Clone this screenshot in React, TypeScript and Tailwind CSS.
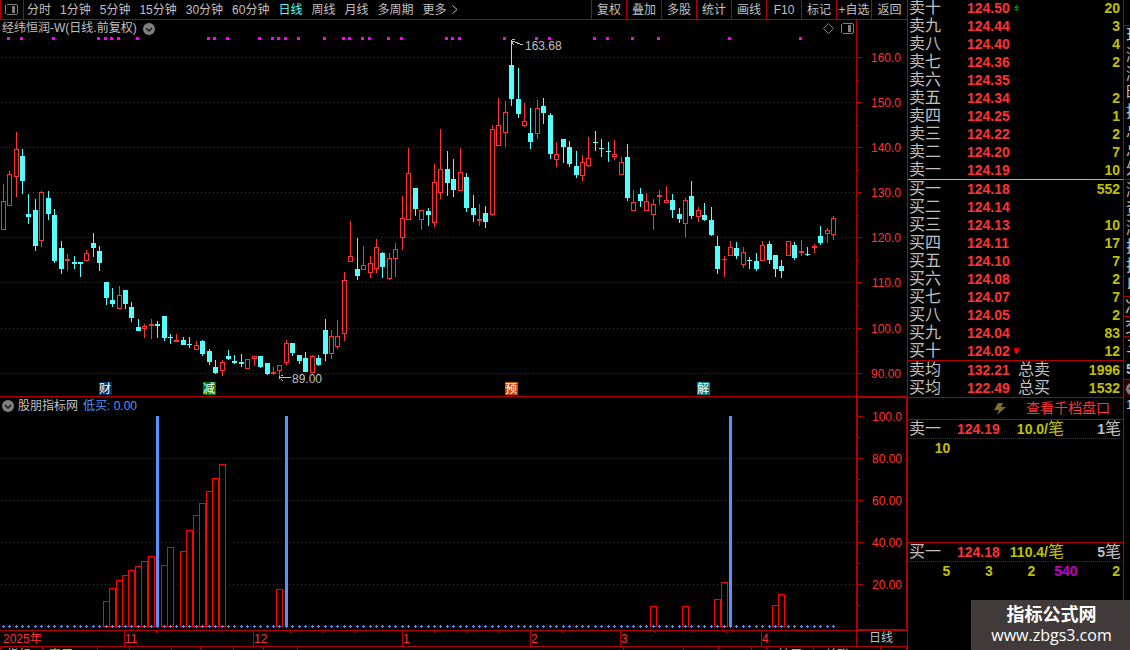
import React from 'react';

// x, high, body top, body bottom, low, direction (1 = up, 0 = down)
const candles = [
  [3, 184, 201, 230, 230, 1], [9, 171, 174, 206, 206, 1], [16, 132, 149, 177, 197, 1], [22, 149, 156, 181, 194, 0],
  [28, 194, 214, 217, 224, 0], [35, 199, 210, 246, 251, 0], [41, 191, 192, 241, 247, 1], [48, 191, 198, 214, 220, 0],
  [54, 209, 215, 261, 263, 0], [61, 241, 248, 269, 274, 0], [67, 254, 259, 261, 271, 1], [74, 256, 262, 264, 269, 0],
  [80, 262, 262, 264, 277, 0], [86, 250, 253, 261, 261, 1], [93, 233, 243, 248, 257, 0], [99, 246, 251, 263, 271, 0],
  [106, 282, 282, 298, 305, 0], [112, 288, 300, 304, 307, 0], [119, 286, 295, 309, 309, 1], [125, 290, 290, 304, 309, 0],
  [131, 302, 307, 318, 322, 0], [138, 319, 327, 331, 331, 0], [144, 324, 326, 329, 338, 1], [151, 319, 324, 326, 339, 1],
  [157, 321, 324, 326, 338, 0], [164, 316, 316, 338, 341, 0], [170, 334, 337, 338, 344, 0], [176, 334, 340, 342, 342, 1],
  [183, 337, 340, 345, 345, 0], [189, 337, 344, 345, 348, 0], [196, 341, 345, 350, 350, 1], [202, 340, 341, 354, 356, 0],
  [209, 349, 351, 362, 365, 0], [215, 360, 367, 373, 374, 0], [222, 360, 362, 371, 376, 1], [228, 350, 356, 359, 360, 0],
  [234, 355, 361, 363, 364, 0], [241, 354, 362, 364, 367, 0], [247, 359, 359, 369, 369, 1], [254, 356, 356, 359, 366, 1],
  [260, 356, 356, 367, 368, 0], [267, 363, 363, 374, 375, 0], [273, 367, 372, 374, 375, 1], [279, 365, 365, 371, 376, 1],
  [286, 340, 343, 363, 365, 1], [292, 343, 343, 353, 356, 0], [299, 355, 355, 361, 364, 0], [305, 352, 358, 372, 372, 0],
  [312, 355, 356, 373, 373, 1], [318, 355, 358, 365, 366, 0], [325, 319, 330, 354, 361, 0], [331, 330, 336, 354, 359, 1],
  [337, 320, 336, 347, 349, 1], [344, 272, 280, 334, 341, 1], [350, 221, 256, 262, 262, 1], [357, 238, 269, 276, 280, 0],
  [363, 246, 265, 270, 270, 1], [370, 256, 263, 273, 278, 1], [376, 239, 247, 269, 273, 1], [382, 252, 253, 267, 278, 0],
  [389, 253, 258, 279, 280, 1], [395, 243, 249, 259, 277, 1], [402, 196, 218, 238, 250, 1], [408, 148, 173, 220, 220, 1],
  [415, 188, 188, 209, 216, 0], [421, 210, 210, 220, 230, 1], [428, 208, 211, 215, 226, 0], [434, 164, 182, 223, 227, 1],
  [440, 129, 169, 193, 199, 1], [447, 151, 169, 183, 196, 0], [453, 159, 179, 190, 197, 0], [460, 148, 172, 191, 191, 1],
  [466, 173, 177, 208, 212, 0], [473, 195, 208, 215, 222, 0], [479, 204, 219, 221, 226, 1], [485, 206, 213, 222, 228, 0],
  [492, 125, 129, 215, 216, 1], [498, 98, 125, 146, 146, 1], [505, 101, 112, 133, 147, 1], [511, 40, 65, 99, 106, 0],
  [518, 68, 99, 114, 118, 0], [524, 103, 121, 126, 127, 1], [530, 108, 133, 142, 149, 0], [537, 100, 108, 134, 139, 1],
  [543, 98, 106, 113, 124, 0], [550, 113, 115, 154, 159, 0], [556, 142, 154, 160, 167, 1], [563, 139, 139, 147, 163, 0],
  [569, 141, 147, 164, 167, 0], [576, 151, 166, 175, 178, 0], [582, 155, 162, 176, 181, 1], [588, 137, 158, 166, 167, 1],
  [595, 131, 142, 143, 151, 0], [601, 139, 148, 149, 157, 0], [608, 142, 151, 152, 162, 0], [614, 140, 154, 157, 160, 1],
  [621, 157, 162, 175, 175, 1], [627, 144, 157, 198, 201, 0], [633, 190, 202, 211, 211, 1], [640, 188, 194, 201, 207, 0],
  [646, 193, 201, 211, 211, 1], [653, 199, 204, 215, 230, 1], [659, 190, 195, 197, 205, 1], [666, 186, 200, 203, 203, 1],
  [672, 194, 200, 210, 218, 0], [679, 208, 214, 219, 223, 0], [685, 198, 200, 224, 238, 1], [691, 181, 196, 216, 219, 0],
  [698, 207, 210, 217, 222, 1], [704, 203, 215, 220, 221, 0], [711, 207, 220, 235, 236, 0], [717, 236, 246, 269, 274, 0],
  [724, 256, 259, 260, 277, 1], [730, 241, 247, 256, 256, 1], [736, 242, 248, 256, 259, 0], [743, 247, 252, 265, 268, 1],
  [749, 257, 260, 261, 269, 0], [756, 253, 261, 269, 271, 0], [762, 241, 245, 261, 261, 1], [769, 241, 244, 260, 264, 0],
  [775, 255, 255, 269, 277, 0], [781, 260, 266, 271, 278, 0], [788, 241, 241, 256, 256, 1], [794, 242, 245, 258, 260, 0],
  [801, 240, 251, 253, 256, 1], [807, 247, 254, 255, 256, 0], [814, 244, 246, 248, 253, 1], [820, 226, 236, 243, 245, 0],
  [827, 228, 230, 234, 243, 1], [833, 216, 218, 235, 240, 1],
];

const signals = [
  7, 20, 52, 97, 104, 110, 117, 136, 207, 213, 226, 258, 271, 277, 284, 297, 323, 342, 348, 361, 368, 387, 400,
  445, 451, 458, 503, 535, 548, 593, 606, 631, 657, 728, 799,
];

const priceTicks: [number, string][] = [
  [57, '160.0'], [102, '150.0'], [147, '140.0'], [192, '130.0'],
  [237, '120.0'], [282, '110.0'], [328, '100.0'], [373, '90.00'],
];
const priceMinor = [80, 125, 170, 215, 260, 305, 351];

const indicatorTicks: [number, string][] = [
  [416, '100.0'], [458, '80.00'], [500, '60.00'], [542, '40.00'], [584, '20.00'],
];
const indicatorMinor = [437, 479, 521, 563, 605];

// x centre, top
const redBars = [
  [106, 601], [112, 588], [119, 580], [125, 575], [131, 570], [138, 566], [144, 561], [151, 556], [164, 565],
  [170, 547], [183, 551], [189, 530], [196, 515], [202, 503], [209, 491], [215, 478], [222, 464], [279, 589],
  [653, 606], [685, 606], [717, 599], [724, 582], [775, 605], [781, 594],
];
const blueBars = [156, 285, 729];

const events = [
  { x: 99, text: '财', color: '#003468' },
  { x: 203, text: '减', color: '#008000' },
  { x: 505, text: '预', color: '#c84800' },
  { x: 697, text: '解', color: '#008080' },
];

const months: [number, string][] = [[124, '11'], [253, '12'], [402, '1'], [530, '2'], [620, '3'], [761, '4']];
const weekTicks = [156, 189, 221, 290, 322, 354, 434, 466, 498, 562, 655, 691, 726];

const periods = ['分时', '1分钟', '5分钟', '15分钟', '30分钟', '60分钟', '日线', '周线', '月线', '多周期'];
const tools = ['复权', '叠加', '多股', '统计', '画线', 'F10', '标记', '+自选', '返回'];

const sells = [
  ['卖十', '124.50', '20'], ['卖九', '124.44', '3'], ['卖八', '124.40', '4'], ['卖七', '124.36', '2'],
  ['卖六', '124.35', ''], ['卖五', '124.34', '2'], ['卖四', '124.25', '1'], ['卖三', '124.22', '2'],
  ['卖二', '124.20', '7'], ['卖一', '124.19', '10'],
];
const buys = [
  ['买一', '124.18', '552'], ['买二', '124.14', ''], ['买三', '124.13', '10'], ['买四', '124.11', '17'],
  ['买五', '124.10', '7'], ['买六', '124.08', '2'], ['买七', '124.07', '7'], ['买八', '124.05', '2'],
  ['买九', '124.04', '83'], ['买十', '124.02', '12'],
];
const totals = [
  ['卖均', '132.21', '1996', '总卖'],
  ['买均', '122.49', '1532', '总买'],
];

const sideTop = ['现', '涨', '涨', '昨', '换', '总', '总', '外'];
const sideBottom = ['涨', '资', '涨', '换', '换', '以'];

const leftTabs = [
  { text: '指标', style: 'w-[42px]' },
  { text: '窗口', style: 'w-[55px] text-[#c0c000]' },
  { text: '', style: 'w-[32px]' },
  { text: '', style: 'w-[42px]' },
  { text: '', style: 'w-[29px]' },
  { text: '', style: 'w-[33px]' },
  { text: '', style: 'w-[30px]' },
  { text: '', style: 'w-[34px]' },
];
const rightTabs = [
  { text: '', style: 'w-[60px]' },
  { text: '', style: 'w-[35px]' },
  { text: '', style: 'w-[33px]' },
  { text: '', style: 'w-[15px]' },
  { text: '扩展', style: 'w-[47px]' },
  { text: '关联', style: 'w-[67px]' },
  { text: '', style: 'w-[26px]' },
];

function PanelIcon() {
  return (
    <svg width="13" height="11" viewBox="0 0 13 11" shapeRendering="crispEdges">
      <path d="M1.500.5h10M1.500 10.500h10M.5 1v9M12.500 1v9" fill="none" stroke="currentColor" />
      <rect x="7" y="2" width="3" height="7" fill="currentColor" />
    </svg>
  );
}

function CollapseIcon() {
  return (
    <svg width="12" height="12" viewBox="0 0 12 12">
      <circle cx="6" cy="6" r="6" fill="#808080" />
      <path d="M3 5l3 3 3-3" fill="none" stroke="#181818" strokeWidth="1.5" />
    </svg>
  );
}

function GridLine({ y }: { y: number }) {
  return <line x1="1" x2="855" y1={y + 0.5} y2={y + 0.5} stroke="#b00000" strokeDasharray="1 3" />;
}

function Candle({ data }: { data: number[] }) {
  const [x, high, top, bottom, low, up] = data;
  const color = up ? '#ff3232' : '#54ffff';
  const hollow = up === 1 && bottom - top > 2;
  return (
    <g fill={color}>
      <rect x={x} y={high} width="1" height={top - high} />
      <rect x={x} y={bottom} width="1" height={low - bottom} />
      {hollow ? (
        <rect x={x - 1.5} y={top + 0.5} width="4" height={bottom - top - 1} fill="#000" stroke={color} />
      ) : (
        <rect x={x - 2} y={top} width="5" height={bottom - top} />
      )}
    </g>
  );
}

function PriceChart() {
  return (
    <svg width="856" height="359" viewBox="0 37 856 359" className="block" shapeRendering="crispEdges">
      {priceTicks.map(([y]) => <GridLine key={y} y={y} />)}
      {signals.map((x) => <rect key={x} x={x} y="37" width="3" height="3" fill="#f0f" />)}
      {candles.map((c) => <Candle key={c[0]} data={c} />)}
      <g fill="none" stroke="#c0c0c0">
        <path d="M523 44.500h-3M520 43.500h-3M518 42.500h-3M515 41.500h-3M512 39.500h3M512.500 41v3M513 44.500h1" />
        <path d="M291 377.500h-11M279.500 376v3M281 375.500h2M281 379.500h1M282 380.500h1" />
      </g>
      <g fill="#c0c0c0" fontSize="12">
        <text x="525" y="50">163.68</text>
        <text x="292" y="383">89.00</text>
      </g>
      {events.map((e) => (
        <g key={e.text}>
          <rect x={e.x} y="382" width="13" height="13" fill={e.color} />
          <text x={e.x} y="393" fontSize="12" fill="#fff">{e.text}</text>
        </g>
      ))}
    </svg>
  );
}

function IndicatorChart() {
  return (
    <svg width="855" height="215" viewBox="0 415 855 215" className="block" shapeRendering="crispEdges">
      {indicatorTicks.slice(1).map(([y]) => <GridLine key={y} y={y} />)}
      {redBars.map(([x, top]) => (
        <rect key={x} x={x - 2.5} y={top + 0.5} width="6" height={626 - top} fill="#000" stroke="#f00" />
      ))}
      {candles.map(([x]) => (
        <path key={x} d={`M${x - 1} 626.5h3M${x + 0.5} 625v3`} stroke="#5494ff" />
      ))}
      {blueBars.map((x) => <rect key={x} x={x} y="416" width="3" height="211" fill="#5494ff" />)}
    </svg>
  );
}

type AxisProps = { top: number; height: number; ticks: [number, string][]; minor: number[] };

function Axis({ top, height, ticks, minor }: AxisProps) {
  return (
    <svg width="48" height={height} viewBox={`0 ${top} 48 ${height}`} className="block" shapeRendering="crispEdges">
      {minor.map((y) => <rect key={y} x="0" y={y} width="2" height="1" fill="#b00000" />)}
      {ticks.map(([y, label]) => (
        <g key={y}>
          <rect x="0" y={y} width="5" height="1" fill="#b00000" />
          <text x="44" y={y + 5} textAnchor="end" fontSize="12" fill="#ff3232">{label}</text>
        </g>
      ))}
    </svg>
  );
}

function LimitArrow({ down }: { down?: boolean }) {
  return (
    <svg width="5" height="6" viewBox="0 0 5 6" className="ml-[3px] block" shapeRendering="crispEdges">
      {down ? (
        <path d="M0 .5h5M2 1.500h1M0 2.500h5M1 3.500h3M1 4.500h3M2 5.500h1" stroke="#f00000" />
      ) : (
        <path d="M2 .5h1M1 1.500h3M0 2.500h5M2 3.500h1M0 4.500h5M2 5.500h1" stroke="#008000" />
      )}
    </svg>
  );
}

function QuoteTable({ rows, label }: { rows: string[][]; label: string }) {
  return (
    <table aria-label={label} className="w-full table-fixed border-collapse leading-[18px]">
      <tbody>
        {rows.map(([name, price, volume, total]) => (
          <tr key={name} className="h-[18px]">
            <th scope="row" className="w-[59px] p-0 pl-px text-left text-base leading-[18px] font-normal">{name}</th>
            <td className="w-[44px] p-0 text-sm leading-[18px] font-bold text-[#ff3232]">{price}</td>
            <td className="w-[44px] p-0 text-base leading-[18px]">
              {name === '卖十' && <LimitArrow />}
              {name === '买十' && <LimitArrow down />}
              {total && <span className="pl-[7px]">{total}</span>}
            </td>
            <td className="p-0 pr-[3px] text-right text-sm leading-[18px] font-bold text-[#c0c000]">{volume}</td>
          </tr>
        ))}
      </tbody>
    </table>
  );
}

type QueueProps = { name: string; price: string; average: string; count: string };

function QueueHeader({ name, price, average, count }: QueueProps) {
  return (
    <div className="mx-px flex h-[19px] items-center border-b border-dotted border-[#b00000] text-base leading-[18px]">
      <span className="w-[48px]">{name}</span>
      <span className="w-[44px] text-sm font-bold text-[#ff3232]">{price}</span>
      <span className="w-[63px] text-right text-[#c0c000]">
        <b className="text-sm">{average}/</b>笔
      </span>
      <span className="ml-auto pr-px">
        <b className="text-sm">{count}</b>笔
      </span>
    </div>
  );
}

function Toolbar() {
  return (
    <nav className="flex h-[20px] items-stretch border-b border-[#b00000] text-xs">
      <button aria-label="面板" className="flex w-[24px] items-center justify-center border-x border-[#b00000] pr-px pb-px text-[#808080]">
        <PanelIcon />
      </button>
      <div className="flex items-center gap-[9px] pl-[3px]">
        {periods.map((p) => (
          <button key={p} className={p === '日线' ? 'text-[#54ffff]' : ''}>{p}</button>
        ))}
        <button className="flex items-center gap-[5px]">
          更多
          <svg width="6" height="9" viewBox="0 0 6 9">
            <path d="M.5.5l4.500 4-4.500 4" fill="none" stroke="currentColor" />
          </svg>
        </button>
      </div>
      <div className="ml-auto flex">
        {tools.map((t) => (
          <button key={t} className="w-[35px] border-l border-[#b00000] whitespace-nowrap last:w-[36px]">{t}</button>
        ))}
      </div>
    </nav>
  );
}

function BottomTabs() {
  return (
    <div className="flex flex-1 overflow-hidden text-xs leading-[16px]">
      {leftTabs.map((t, i) => (
        <span key={i} className={`shrink-0 border-l border-[#b00000] pl-[6px] ${t.style}`}>{t.text}</span>
      ))}
      <span className="flex-1 border-x border-[#b00000]" />
      {rightTabs.map((t, i) => (
        <span key={i} className={`shrink-0 border-r border-[#b00000] pl-[11px] ${t.style}`}>{t.text}</span>
      ))}
    </div>
  );
}

export default function App() {
  return (
    <div className="relative flex h-screen overflow-hidden bg-black font-['Liberation_Sans','Noto_Sans_CJK_SC',sans-serif] text-[#c0c0c0]">
      <main className="flex min-w-0 flex-1 flex-col">
        <Toolbar />

        <section className="flex">
          <div className="min-w-0 flex-1 overflow-hidden">
            <div className="flex h-[17px] items-center pl-[2px] text-xs leading-[17px]">
              <h1 className="mr-[6px]">经纬恒润-W(日线.前复权)</h1>
              <CollapseIcon />
              <span className="ml-auto flex items-center gap-[7px] pr-[2px] text-[#808080]">
                <svg width="11" height="11" viewBox="0 0 11 11">
                  <path d="M5.500.5l5 5-5 5-5-5z" fill="none" stroke="currentColor" />
                </svg>
                <PanelIcon />
              </span>
            </div>
            <PriceChart />
          </div>
          <div className="w-[51px] shrink-0 border-l border-[#b00000]">
            <Axis top={20} height={376} ticks={priceTicks} minor={priceMinor} />
          </div>
        </section>

        <section className="flex">
          <div className="min-w-0 flex-1 overflow-hidden border-t border-[#b00000]">
            <div className="flex h-[18px] items-center pl-[2px] text-xs leading-[18px]">
              <CollapseIcon />
              <h2 className="ml-1">股朋指标网</h2>
              <span className="ml-[5px] text-[#5494ff]">低买: 0.00</span>
            </div>
            <IndicatorChart />
          </div>
          <div className="w-[51px] shrink-0 border-2 border-r border-b border-[#b00000]">
            <Axis top={398} height={231} ticks={indicatorTicks} minor={indicatorMinor} />
          </div>
        </section>

        <div className="flex h-[17px] border-y border-[#b00000]">
          <div className="min-w-0 flex-1 overflow-hidden">
            <svg width="856" height="15" viewBox="0 0 856 15" className="block" shapeRendering="crispEdges">
              <text x="3" y="12" fontSize="12" fill="#ff3232">2025年</text>
              {months.map(([x, label]) => (
                <g key={x}>
                  <rect x={x} y="0" width="1" height="15" fill="#b00000" />
                  <text x={x + 1} y="12" fontSize="12" fill="#ff3232">{label}</text>
                </g>
              ))}
              {weekTicks.map((x) => <rect key={x} x={x} y="0" width="1" height="2" fill="#b00000" />)}
            </svg>
          </div>
          <button className="w-[51px] border-l border-[#b00000] pr-[2px] text-xs leading-[15px]">日线</button>
        </div>
        <BottomTabs />
      </main>

      <aside className="flex w-[217px] shrink-0 flex-col border-x border-[#b00000]">
        <div className="flex h-[179px] flex-col justify-end overflow-hidden">
          <QuoteTable rows={sells} label="卖盘" />
        </div>
        <div className="flex h-px">
          <div className="flex-1 bg-[#f0b040]" />
          <div className="w-[15px] bg-[#5494ff]" />
        </div>
        <QuoteTable rows={buys} label="买盘" />
        <div className="border-y border-[#b00000]">
          <QuoteTable rows={totals} label="均价" />
        </div>
        <button className="flex h-[22px] items-center justify-end gap-[20px] border-b border-[#b00000] pr-[13px] text-sm leading-[21px] text-[#ff3232]">
          <svg width="12" height="12" viewBox="0 0 12 12">
            <path d="M4 0h5L7 4h5L3 12l2-5H0z" fill="#80702c" />
          </svg>
          查看千档盘口
        </button>
        <div className="h-[123px] border-b border-[#b00000]">
          <QueueHeader name="卖一" price="124.19" average="10.0" count="1" />
          <div className="grid grid-cols-5 pr-[3px] text-right text-sm leading-[18px] font-bold text-[#c0c000]">
            <span>10</span>
          </div>
        </div>
        <QueueHeader name="买一" price="124.18" average="110.4" count="5" />
        <div className="grid grid-cols-5 pr-[3px] text-right text-sm leading-[18px] font-bold text-[#c0c000]">
          <span>5</span>
          <span>3</span>
          <span>2</span>
          <span className="text-[#c000c0]">540</span>
          <span>2</span>
        </div>
      </aside>

      <div className="w-[6px] shrink-0 overflow-hidden pl-[2px] text-base leading-[19px] whitespace-nowrap">
        <div className="-ml-[2px] h-[26px] border-b border-[#b00000]" />
        <div className="h-[153px]">
          {sideTop.map((t, i) => <div key={i}>{t}</div>)}
        </div>
        <div className="-ml-[2px] h-[118px] border-y border-[#b00000] pl-[2px]">
          {sideBottom.map((t, i) => <div key={i}>{t}</div>)}
        </div>
        <div className="-ml-[2px] h-[20px] border-b border-[#b00000] pl-px">净</div>
        <div className="-ml-[2px] h-[20px] border-b border-[#b00000] pl-px">交</div>
        <div className="h-[22px]">三</div>
        <div className="h-[20px] text-sm font-bold">5</div>
        <div className="-ml-[2px] h-[18px] border-t border-[#b00000] bg-[#300000] pt-[3px] pl-[2px]">
          <CollapseIcon />
        </div>
        <div className="text-xs">1</div>
      </div>

      <div className="absolute right-0 bottom-0 flex h-[50px] w-[159px] flex-col items-center bg-[#403a3a] pt-[5px] pl-[2px] text-white">
        <strong className="text-lg leading-[20px]">指标公式网</strong>
        <span className="font-['Open_Sans',sans-serif] text-base leading-[20px]">www.zbgs3.com</span>
      </div>
    </div>
  );
}
